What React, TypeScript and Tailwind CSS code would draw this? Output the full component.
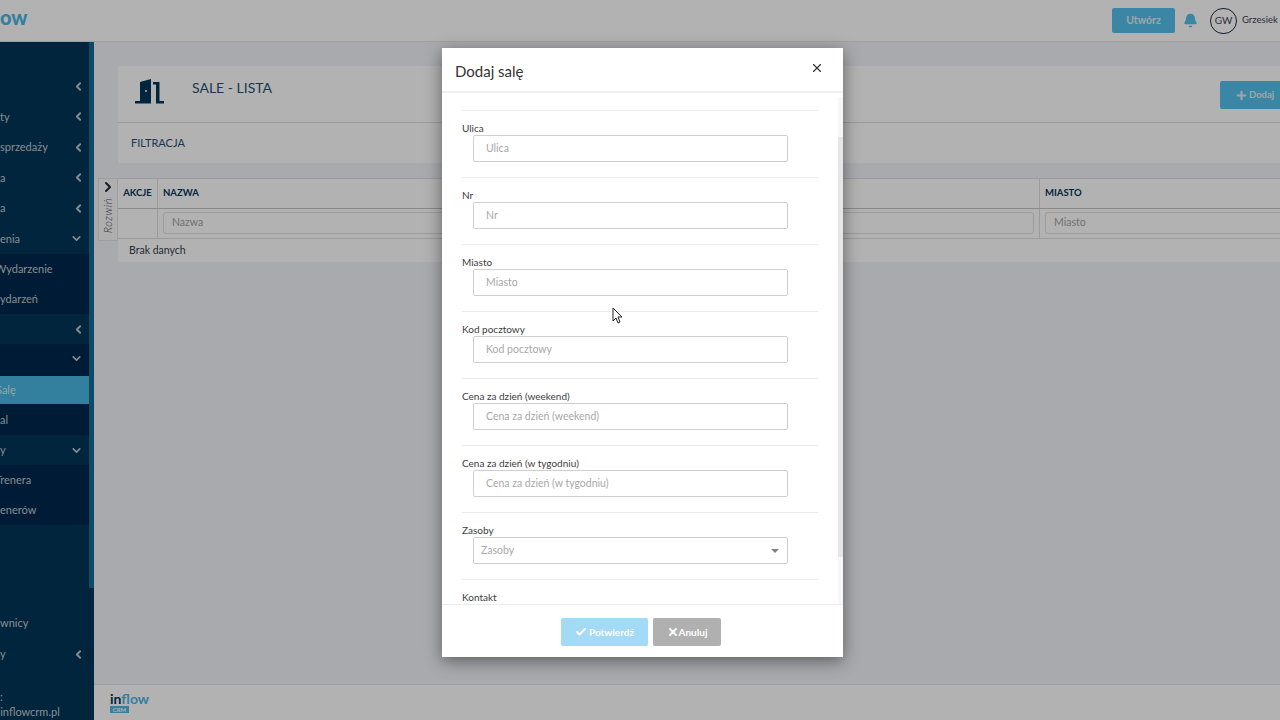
import { Bell, Check, ChevronDown, ChevronLeft, ChevronRight, Plus, X } from 'lucide-react'

const font = { fontFamily: 'Lato, "Liberation Sans", sans-serif' }

const navTop = [
  { label: '', dir: 'left', cls: 'h-[30px] mt-[29px]' },
  { label: 'ty', dir: 'left', cls: 'h-[31px]' },
  { label: 'sprzedaży', dir: 'left', cls: 'h-[30px]' },
  { label: 'a', dir: 'left', cls: 'h-[31px]' },
  { label: 'a', dir: 'left', cls: 'h-[30px]' },
  { label: 'enia', dir: 'down', cls: 'h-[31px]' },
]

const fields = ['Ulica', 'Nr', 'Miasto', 'Kod pocztowy', 'Cena za dzień (weekend)', 'Cena za dzień (w tygodniu)']

function NavRow({ label, dir, className = '', labelClass = '' }: { label: string; dir?: string; className?: string; labelClass?: string }) {
  return (
    <div className={`flex items-center justify-between whitespace-nowrap pr-[4px] text-[11px] text-[#c2c8cd] ${className}`}>
      <span className={labelClass}>{label}</span>
      {dir === 'left' && <ChevronLeft className="h-[13px] w-[13px] stroke-[3.5]" />}
      {dir === 'down' && <ChevronDown className="mr-[2px] h-[13px] w-[13px] stroke-[3]" />}
    </div>
  )
}

function Sidebar() {
  return (
    <aside className="flex w-[94px] shrink-0 flex-col overflow-hidden bg-[#03365a]">
      <div className="flex min-h-0 flex-1">
        <div className="w-[89px] shrink-0">
          {navTop.map((item, i) => (
            <NavRow key={i} label={item.label} dir={item.dir} className={item.cls} labelClass="pt-[1px]" />
          ))}
          <div className="bg-[#00284d]">
            <NavRow label="Wydarzenie" className="h-[30px]" labelClass="-ml-[5px]" />
            <NavRow label="ydarzeń" className="h-[30px]" />
          </div>
          <NavRow label="" dir="left" className="h-[30px]" />
          <NavRow label="" dir="down" className="h-[32px] bg-[#00284d] pb-[3px]" />
          <NavRow label="Salę" className="h-[28px] bg-[#49b6e3] text-[#dce9ee]" labelClass="-ml-[4px]" />
          <NavRow label="al" className="h-[31px] bg-[#00284d]" labelClass="pt-[1px]" />
          <NavRow label="y" dir="down" className="h-[30px]" />
          <div className="bg-[#00284d]">
            <NavRow label="Trenera" className="h-[30px]" labelClass="-ml-[5px]" />
            <NavRow label="enerów" className="h-[30px]" />
          </div>
          <NavRow label="wnicy" className="mt-[83px] h-[31px]" />
          <NavRow label="y" dir="left" className="h-[30px]" />
        </div>
        <div className="flex w-[5px] flex-col">
          <div className="h-[546px] bg-[#156a95]" />
        </div>
      </div>
      <div className="h-[36px] pt-[5px] text-[11px] leading-[15px] text-[#c2c8cd]">
        <div>:</div>
        <div className="-ml-[9px] whitespace-nowrap">@inflowcrm.pl</div>
      </div>
    </aside>
  )
}

function Table() {
  return (
    <div className="flex">
      <div className="flex h-[63px] w-[20px] shrink-0 flex-col items-center border border-[#e2e2e2] bg-[#fafafa] text-[#1b2b3b]">
        <ChevronRight className="h-4 w-4 stroke-[3]" />
        <span className="mt-[3px] rotate-180 text-[11px] font-light italic tracking-[0.6px] text-[#445] [writing-mode:vertical-rl]">Rozwiń</span>
      </div>
      <div className="min-w-0 flex-1 bg-white text-[10.5px]">
        <div className="flex h-[31px] items-center border-y border-b-[#c4c4c4] border-t-[#dedede] text-[9.5px] font-bold text-[#03365a]">
          <div className="flex h-full w-[40px] items-center justify-center border-r border-[#dedede]">AKCJE</div>
          <div className="flex h-full w-[882px] items-center border-r border-[#dedede] pl-[5px]">NAZWA</div>
          <div className="flex h-full flex-1 items-center pl-[5px]">MIASTO</div>
        </div>
        <div className="flex h-[30px] border-b border-[#dedede]">
          <div className="w-[40px] border-r border-[#dedede]" />
          <div className="w-[882px] border-r border-[#dedede] px-[5px] pt-[3px]">
            <div className="flex h-[22px] items-center rounded-[3px] border border-[#e0e0e0] pl-[8px] text-[#a3a3a3]">Nazwa</div>
          </div>
          <div className="flex-1 pl-[5px] pt-[3px]">
            <div className="flex h-[22px] items-center rounded-l-[3px] border border-r-0 border-[#e0e0e0] pl-[8px] text-[#a3a3a3]">Miasto</div>
          </div>
        </div>
        <div className="flex h-[23px] items-center pl-[11px] text-[#33404d]">Brak danych</div>
      </div>
    </div>
  )
}

function Field({ label, select }: { label: string; select?: boolean }) {
  return (
    <div className="h-[67px] border-b border-[#ececec] pt-[10px]">
      <div className="h-[14px] text-[10px] leading-[14px] text-[#3d3d3d]">{label}</div>
      <div className={`ml-[11px] flex h-[27px] w-[315px] items-center justify-between rounded-[2px] border border-[#cfcfcf] pr-[8px] text-[10.5px] text-[#a8a8a8] ${select ? 'pl-[7px]' : 'pl-[12px]'}`}>
        {label}
        {select && <span className="h-0 w-0 border-x-[4px] border-t-[4px] border-x-transparent border-t-[#808080]" />}
      </div>
    </div>
  )
}

function Dialog() {
  return (
    <div className="absolute left-[442px] top-[48px] z-20 flex h-[609px] w-[401px] flex-col bg-white shadow-[0_4px_16px_rgba(0,0,0,0.45)]">
      <div className="flex h-[45px] shrink-0 items-center justify-between border-b-2 border-[#efefef] pl-[13px] pr-[19px]">
        <h2 className="mt-[4px] text-[15px] text-[#333]">Dodaj salę</h2>
        <X className="mb-[3px] h-[14px] w-[14px] text-[#333]" />
      </div>
      <div className="flex min-h-0 flex-1">
        <div className="w-[396px] overflow-hidden px-[20px] pt-[17px]">
          <div className="border-t border-[#ececec]">
            {fields.map(f => (
              <Field key={f} label={f} />
            ))}
            <Field label="Zasoby" select />
            <div className="pt-[10px] text-[10px] leading-[14px] text-[#3d3d3d]">Kontakt</div>
          </div>
        </div>
        <div className="mt-[4px] flex w-[5px] flex-col bg-[#f7f7f7]">
          <div className="mt-[40px] h-[420px] bg-[#e6e6e6]" />
        </div>
      </div>
      <div className="flex h-[53px] shrink-0 justify-center gap-[5px] border-t border-[#ececec] pr-[3px] pt-[13px] text-[10px] font-bold text-white">
        <div className="flex h-[28px] w-[87px] items-center justify-center gap-[2px] rounded-[2px] bg-[#a3daf6]">
          <Check className="h-3 w-3 stroke-[4]" />
          Potwierdź
        </div>
        <div className="flex h-[28px] w-[68px] items-center justify-center rounded-[2px] bg-[#b0b0b0]">
          <X className="h-3 w-3 stroke-[4]" />
          Anuluj
        </div>
      </div>
    </div>
  )
}

export default function App() {
  return (
    <div className="relative flex h-[720px] w-[1280px] flex-col overflow-hidden bg-[#f1f4fa]" style={font}>
      <header className="flex h-[42px] shrink-0 items-center justify-between border-b border-[#e4e4e4] bg-white">
        <span className="-mt-[7px] text-[20px] font-black leading-none text-[#49b6e3]">ow</span>
        <div className="flex items-center">
          <div className="flex h-[25px] w-[63px] items-center justify-center rounded-[2px] bg-[#56c1ec] text-[10.5px] font-bold text-[#e2edf2]">Utwórz</div>
          <Bell className="ml-[8px] h-[15px] w-[15px] fill-[#56c1ec] text-[#56c1ec]" />
          <div className="ml-[12px] flex h-[26px] w-[27px] items-center justify-center rounded-full border border-[#1a2c44] text-[10px] text-[#445]">GW</div>
          <span className="ml-[5px] w-[38px] whitespace-nowrap text-[9.5px] text-[#445]">Grzesiek</span>
        </div>
      </header>

      <div className="flex min-h-0 flex-1">
        <Sidebar />
        <div className="flex min-w-0 flex-1 flex-col">
          <main className="min-h-0 flex-1 pl-[4px] pt-[24px]">
            <div className="ml-[20px] bg-white">
              <div className="flex h-[57px] items-start justify-between border-b border-[#dedede]">
                <div className="flex items-start">
                  <svg viewBox="0 0 30 25" className="ml-[17px] mt-[13px] h-[25px] w-[30px] fill-[#03365a]">
                    <path d="M5 22V3L16 0v22z" />
                    <path d="M0 22h16v2.5H0zM18 3h6.5v19H29v2.5h-8V5.5h-3z" />
                    <circle cx="11" cy="12" r="1" fill="#ffffff" />
                  </svg>
                  <h1 className="ml-[27px] mt-[13px] text-[14px] leading-[18px] text-[#2a4f70]">SALE - LISTA</h1>
                </div>
                <div className="mt-[15px] flex h-[28px] w-[60px] items-center gap-[1px] rounded-l-[2px] bg-[#56c1ec] pl-[15px] text-[9.5px] font-bold text-[#e2edf2]">
                  <Plus className="h-[13px] w-[13px] stroke-[4]" />
                  Dodaj
                </div>
              </div>
              <div className="flex h-[40px] items-center pl-[13px] text-[11px] text-[#2a4f70]">FILTRACJA</div>
            </div>
            <div className="mt-[15px]">
              <Table />
            </div>
          </main>
          <footer className="flex h-[36px] shrink-0 items-center border-t border-[#e4e4e4] bg-white pl-[16px]">
            <div className="flex flex-col leading-none">
              <span className="text-[14px] font-bold leading-[12px] text-[#49b6e3]">
                <span className="text-[#03365a]">in</span>flow
              </span>
              <span className="mt-[1px] w-[19px] bg-[#49b6e3] text-center text-[6px] font-bold leading-[7px] text-white">CRM</span>
            </div>
          </footer>
        </div>
      </div>

      <div className="absolute inset-0 z-10 bg-black/30" />
      <Dialog />

      <svg viewBox="0 0 12 18" className="absolute left-[612px] top-[307px] z-30 h-[18px] w-[12px]">
        <path d="M1 1v13l3-3 2 5 2-1-2-5h4z" fill="#fff" stroke="#222" strokeWidth="1" />
      </svg>
    </div>
  )
}
